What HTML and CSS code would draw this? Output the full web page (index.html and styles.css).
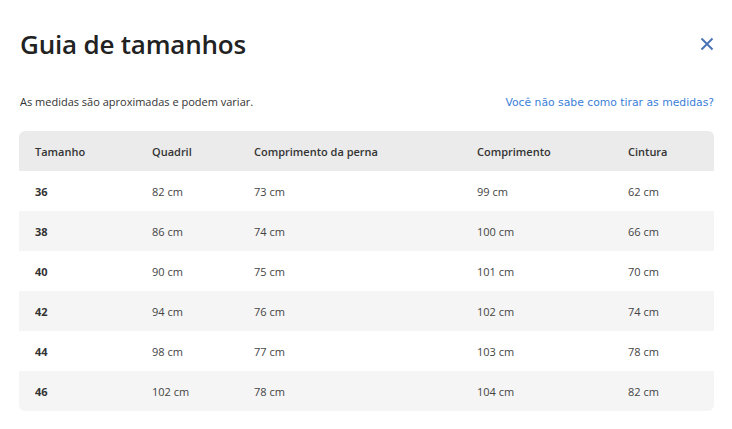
FILE: index.html
```html
<!DOCTYPE html>
<html lang="pt">
<head>
<meta charset="utf-8">
<link rel="stylesheet" href="styles.css">
</head>
<body>
<div class="modal">
  <div class="head">
    <h1 class="title">Guia de tamanhos</h1>
    <button class="close" aria-label="Fechar">
      <svg width="14" height="14" viewBox="0 0 14 14"><path d="M1.5 1.5 L12.5 12.5 M12.5 1.5 L1.5 12.5" stroke="#4b74b7" stroke-width="2" fill="none"/></svg>
    </button>
  </div>
  <div class="info">
    <span class="note">As medidas são aproximadas e podem variar.</span>
    <a class="link" href="#">Você não sabe como tirar as medidas?</a>
  </div>
  <table class="sizes">
    <thead>
      <tr><th>Tamanho</th><th>Quadril</th><th>Comprimento da perna</th><th>Comprimento</th><th>Cintura</th></tr>
    </thead>
    <tbody>
      <tr><td class="sz">36</td><td>82 cm</td><td>73 cm</td><td>99 cm</td><td>62 cm</td></tr>
      <tr><td class="sz">38</td><td>86 cm</td><td>74 cm</td><td>100 cm</td><td>66 cm</td></tr>
      <tr><td class="sz">40</td><td>90 cm</td><td>75 cm</td><td>101 cm</td><td>70 cm</td></tr>
      <tr><td class="sz">42</td><td>94 cm</td><td>76 cm</td><td>102 cm</td><td>74 cm</td></tr>
      <tr><td class="sz">44</td><td>98 cm</td><td>77 cm</td><td>103 cm</td><td>78 cm</td></tr>
      <tr><td class="sz">46</td><td>102 cm</td><td>78 cm</td><td>104 cm</td><td>82 cm</td></tr>
    </tbody>
  </table>
</div>
</body>
</html>
```
FILE: styles.css
```css
html, body { margin: 0; padding: 0; background: #fff; }
body { font-family: "Open Sans", "Liberation Sans", sans-serif; color: #333; }
.modal { padding: 29px 18px 0 19px; }
.head { display: flex; justify-content: space-between; align-items: center; height: 30px; }
.title { margin: 0 0 0 1px; font-size: 26px; font-weight: 600; color: #222; letter-spacing: -0.2px; }
.close { border: 0; background: none; padding: 0; margin-right: 0; width: 14px; height: 14px; display: flex; }
.info { display: flex; justify-content: space-between; align-items: baseline; margin-top: 35px; margin-bottom: 22px; }
.note { font-size: 11px; color: #333; margin-left: 1px; }
.link { font-family: "DejaVu Sans", sans-serif; font-size: 10.8px; color: #3b80d8; text-decoration: none; }
.sizes { width: 100%; border-collapse: separate; border-spacing: 0; font-size: 11px; border-radius: 6px; overflow: hidden; }
.sizes th { background: #ebebeb; font-weight: 600; text-align: left; height: 40px; padding: 0; color: #333; }
.sizes td { height: 40px; padding: 0; color: #444; }
.sizes tbody tr:nth-child(even) td { background: #f5f5f5; }
.sizes th:nth-child(1), .sizes td:nth-child(1) { padding-left: 16px; width: 117px; }
.sizes th:nth-child(2), .sizes td:nth-child(2) { width: 102px; }
.sizes th:nth-child(3), .sizes td:nth-child(3) { width: 223px; }
.sizes th:nth-child(4), .sizes td:nth-child(4) { width: 151px; }
.sizes td.sz { font-weight: 700; color: #333; }
```
